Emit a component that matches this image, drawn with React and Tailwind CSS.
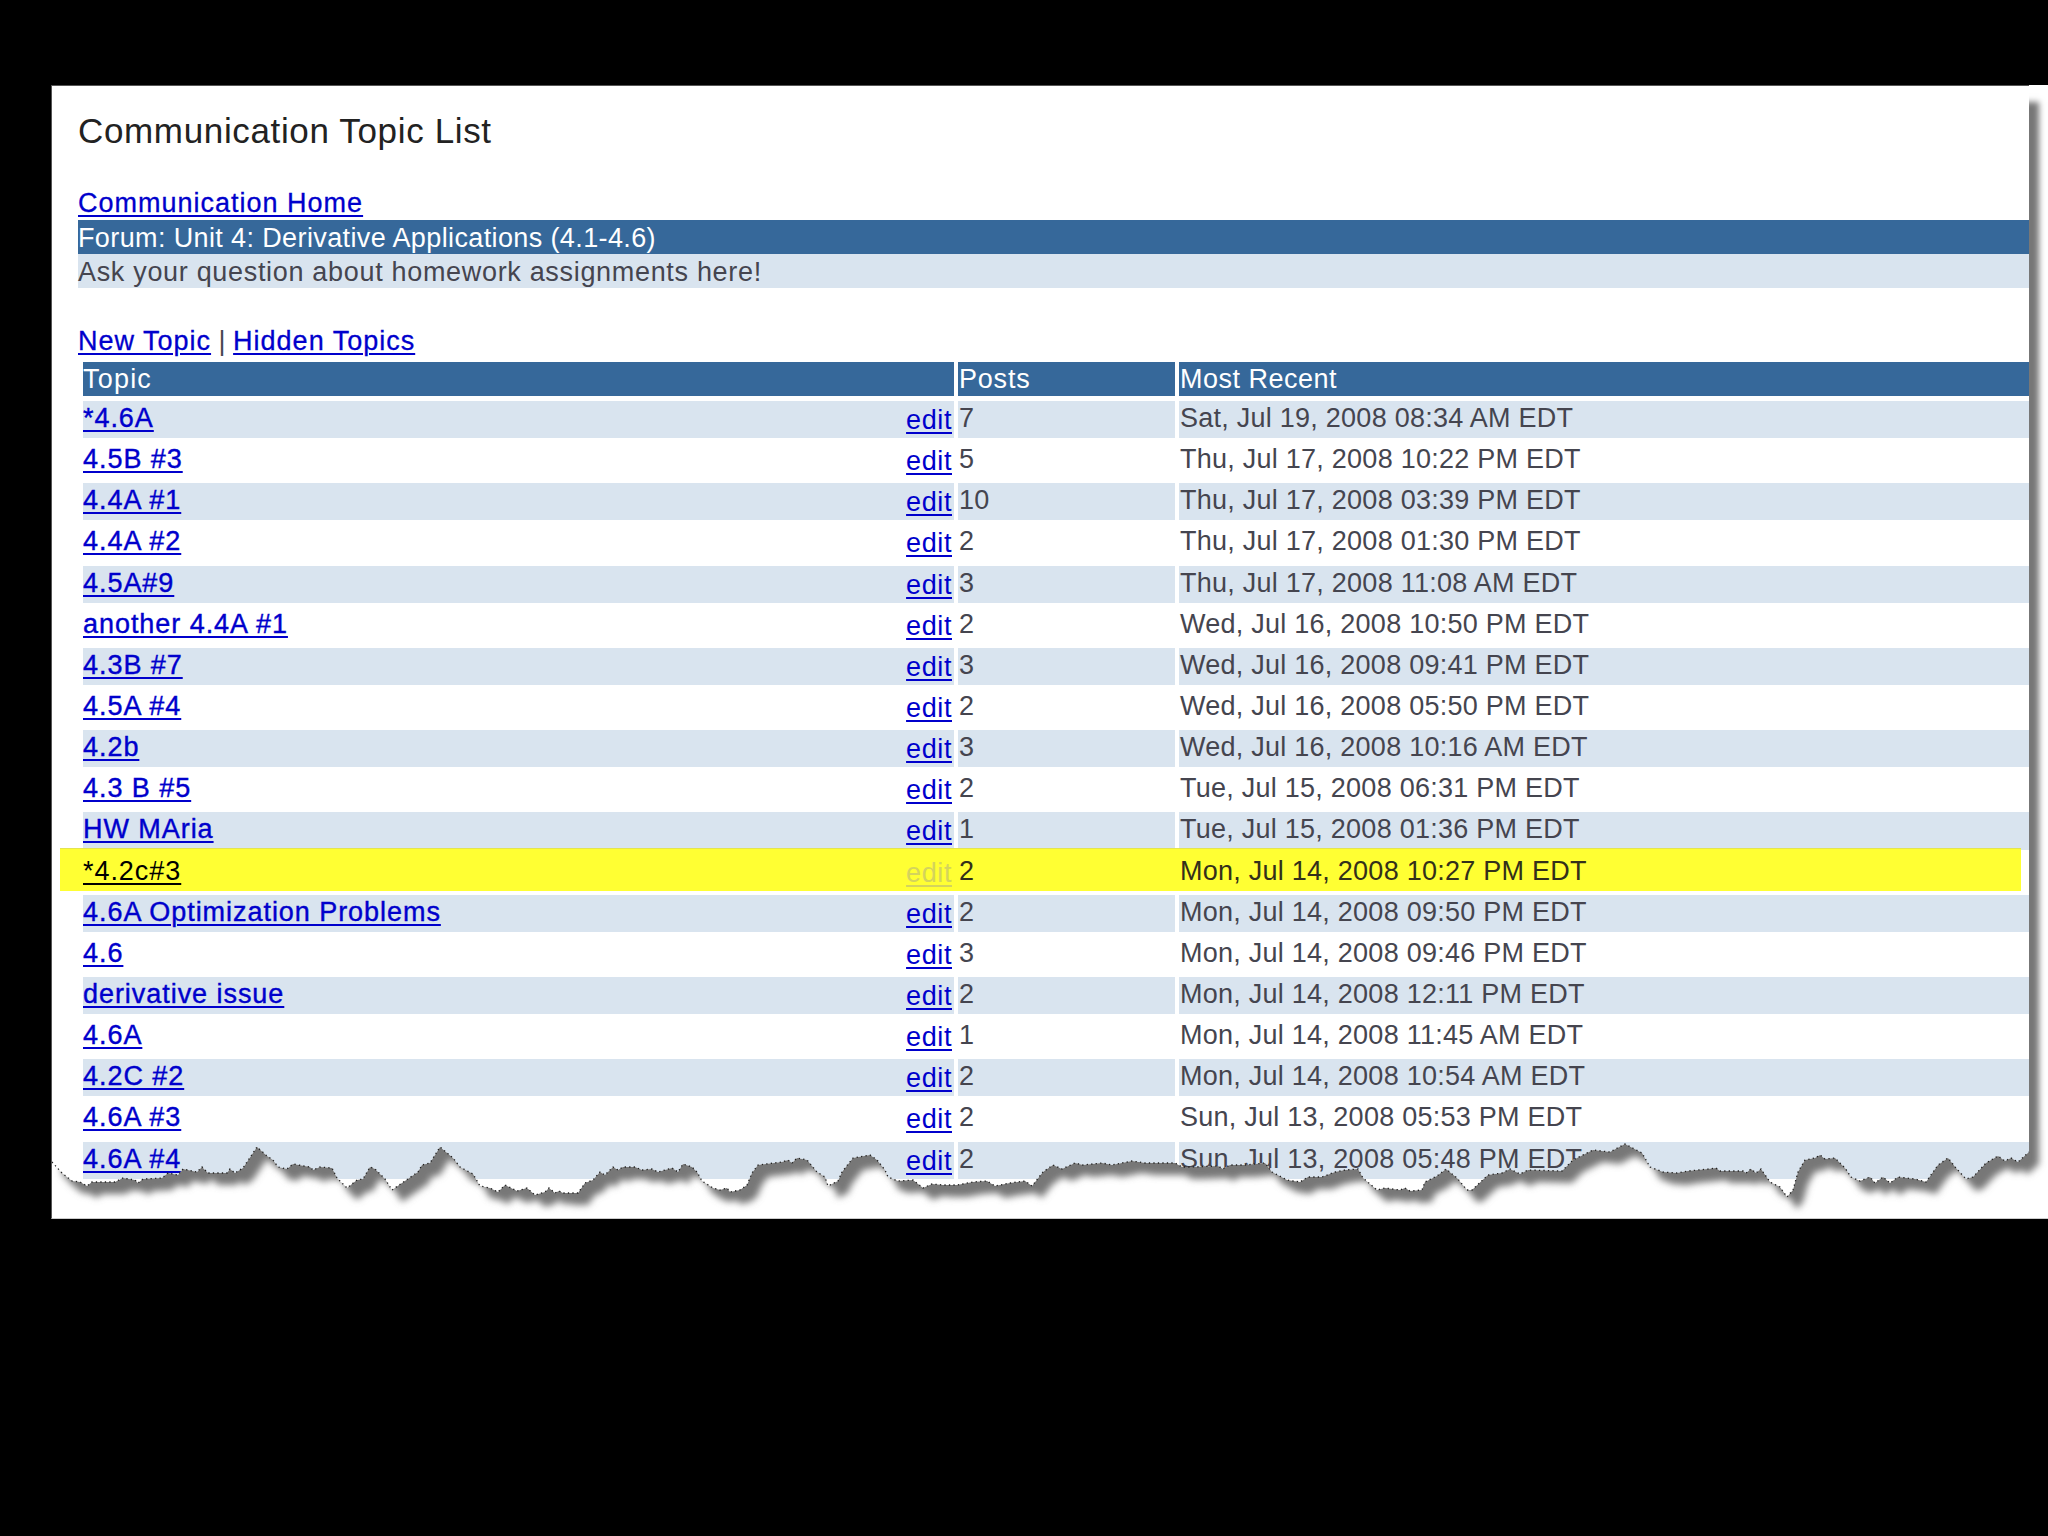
const topics = [
  ['*4.6A', '7', 'Sat, Jul 19, 2008 08:34 AM EDT'],
  ['4.5B #3', '5', 'Thu, Jul 17, 2008 10:22 PM EDT'],
  ['4.4A #1', '10', 'Thu, Jul 17, 2008 03:39 PM EDT'],
  ['4.4A #2', '2', 'Thu, Jul 17, 2008 01:30 PM EDT'],
  ['4.5A#9', '3', 'Thu, Jul 17, 2008 11:08 AM EDT'],
  ['another 4.4A #1', '2', 'Wed, Jul 16, 2008 10:50 PM EDT'],
  ['4.3B #7', '3', 'Wed, Jul 16, 2008 09:41 PM EDT'],
  ['4.5A #4', '2', 'Wed, Jul 16, 2008 05:50 PM EDT'],
  ['4.2b', '3', 'Wed, Jul 16, 2008 10:16 AM EDT'],
  ['4.3 B #5', '2', 'Tue, Jul 15, 2008 06:31 PM EDT'],
  ['HW MAria', '1', 'Tue, Jul 15, 2008 01:36 PM EDT'],
  ['*4.2c#3', '2', 'Mon, Jul 14, 2008 10:27 PM EDT'],
  ['4.6A Optimization Problems', '2', 'Mon, Jul 14, 2008 09:50 PM EDT'],
  ['4.6', '3', 'Mon, Jul 14, 2008 09:46 PM EDT'],
  ['derivative issue', '2', 'Mon, Jul 14, 2008 12:11 PM EDT'],
  ['4.6A', '1', 'Mon, Jul 14, 2008 11:45 AM EDT'],
  ['4.2C #2', '2', 'Mon, Jul 14, 2008 10:54 AM EDT'],
  ['4.6A #3', '2', 'Sun, Jul 13, 2008 05:53 PM EDT'],
  ['4.6A #4', '2', 'Sun, Jul 13, 2008 05:48 PM EDT'],
];

// torn bottom edge of the screenshot, in page coordinates
const torn =
  '52,1162 62,1173 72,1181 80,1182 87,1186 92,1182 115,1182 123,1178 135,1180 138,1183 143,1179 162,1178 168,1173 178,1175 183,1169 197,1172 202,1167 208,1173 227,1173 230,1169 235,1173 243,1168 257,1147 267,1156 273,1160 278,1167 287,1169 293,1164 310,1167 313,1170 320,1167 332,1168 337,1178 347,1188 357,1180 363,1179 370,1167 375,1169 385,1179 392,1190 402,1183 418,1172 422,1165 430,1163 440,1147 453,1158 460,1167 473,1174 480,1186 490,1188 498,1192 505,1185 517,1191 527,1188 535,1195 545,1192 549,1188 555,1193 559,1191 563,1193 578,1193 585,1183 593,1180 600,1172 605,1175 613,1167 618,1170 623,1167 635,1167 642,1170 652,1169 658,1172 672,1168 678,1172 683,1164 692,1167 697,1172 702,1181 713,1188 720,1190 727,1188 730,1192 740,1190 747,1185 752,1173 758,1165 782,1162 788,1160 792,1163 797,1158 807,1160 817,1172 825,1177 828,1186 838,1181 842,1172 853,1158 870,1155 877,1160 885,1170 888,1177 898,1181 913,1180 923,1188 932,1184 943,1185 957,1185 973,1182 987,1181 995,1186 1010,1183 1025,1181 1032,1186 1043,1172 1053,1165 1062,1169 1075,1163 1083,1165 1102,1163 1112,1165 1132,1161 1145,1163 1175,1163 1182,1167 1192,1167 1218,1166 1223,1169 1230,1165 1245,1165 1265,1163 1272,1172 1287,1180 1300,1182 1308,1177 1322,1177 1335,1172 1345,1170 1358,1169 1363,1178 1377,1190 1385,1188 1400,1190 1405,1188 1410,1191 1422,1190 1425,1182 1437,1176 1446,1169 1457,1178 1467,1190 1472,1190 1488,1175 1502,1173 1510,1169 1520,1174 1528,1170 1562,1171 1573,1160 1593,1150 1610,1152 1625,1144 1642,1153 1650,1167 1663,1172 1677,1173 1688,1171 1708,1169 1716,1168 1720,1171 1743,1171 1746,1173 1751,1169 1756,1173 1761,1169 1770,1182 1780,1187 1787,1197 1793,1190 1798,1172 1805,1160 1815,1158 1820,1155 1825,1159 1835,1158 1845,1168 1851,1177 1860,1181 1870,1177 1875,1183 1883,1177 1890,1183 1898,1177 1915,1179 1926,1182 1938,1165 1948,1158 1956,1168 1966,1179 1973,1177 1986,1163 1998,1156 2005,1161 2011,1158 2018,1162 2029,1152';

function TornEdge() {
  return (
    <svg
      className="absolute left-0 bottom-0 w-[1996px] h-[88px]"
      viewBox="52 1130 1996 88"
    >
      <defs>
        <clipPath id="below">
          <polygon points={`${torn} 2029,1130 2048,1130 2048,1218 52,1218`} />
        </clipPath>
        <filter id="soft" x="-5%" y="-50%" width="110%" height="200%">
          <feGaussianBlur stdDeviation="3.6" />
        </filter>
      </defs>
      <polygon points={`${torn} 2029,1130 2048,1130 2048,1218 52,1218`} fill="#ffffff" />
      <g clipPath="url(#below)">
        <polygon
          points={`${torn} 2029,1000 52,1000`}
          fill="#777777"
          filter="url(#soft)"
          transform="translate(10 12)"
        />
      </g>
      <polyline
        points={torn}
        fill="none"
        stroke="#222222"
        strokeWidth="1.3"
        strokeDasharray="1.3 3.2"
      />
    </svg>
  );
}

function Row({ topic, posts, recent, striped }) {
  const cell = striped ? 'bg-[#d9e4ef]' : '';
  return (
    <div className="grid grid-cols-[871px_217px_850px] gap-x-1 h-[37.15px] text-[#45454f] tracking-[0.25px]">
      <div className={`${cell} flex justify-between pr-[2px]`}>
        <a className="text-[#0000cc] tracking-[0.95px] [-webkit-text-stroke:0.4px] underline decoration-2 underline-offset-[3px]">{topic}</a>
        <a className="text-[#0000cc] tracking-[0.6px] underline decoration-2 underline-offset-[3px] mt-[2px]">edit</a>
      </div>
      <div className={`${cell} pl-[1px]`}>{posts}</div>
      <div className={`${cell} pl-[1px]`}>{recent}</div>
    </div>
  );
}

function HighlightRow({ topic, posts, recent }) {
  return (
    <div className="-ml-[23px] mr-[8px] -mt-[6px] h-[43.15px] pt-[6px] pl-[23px] bg-[#ffff33] border-t border-[#e4e450]">
      <div className="grid grid-cols-[871px_217px_850px] gap-x-1 -mt-[1px] text-[#33301a] tracking-[0.25px]">
        <div className="flex justify-between pr-[2px]">
          <a className="text-black tracking-[0.95px] underline decoration-2 underline-offset-[3px]">{topic}</a>
          <a className="text-[#d4d45c] tracking-[0.6px] underline decoration-2 underline-offset-[3px] mt-[2px]">edit</a>
        </div>
        <div className="pl-[1px]">{posts}</div>
        <div className="pl-[1px]">{recent}</div>
      </div>
    </div>
  );
}

export default function App() {
  return (
    <div className="h-[1536px] bg-black pt-[85px] overflow-hidden font-['Liberation_Sans',Arial,sans-serif] text-[27px] leading-[34px]">
      <div className="relative ml-[51px] h-[1134px] bg-white border-l border-b border-l-[#555555] border-b-[#cccccc] overflow-hidden">
        <div className="w-[1977px] h-[1200px] bg-white border-t border-[#555555] pl-[26px] pt-[25px] shadow-[10px_17px_6px_#777777]">
          <h1 className="text-[35px] leading-[40px] tracking-[0.65px] text-[#222222]">Communication Topic List</h1>
          <div className="mt-[35px] h-[34px]">
            <a className="text-[#0000cc] tracking-[1px] [-webkit-text-stroke:0.3px] underline decoration-2 underline-offset-[3px]">Communication Home</a>
          </div>
          <div className="h-[34px] pt-[1px] bg-[#36689a] text-white tracking-[0.38px]">
            Forum: Unit 4: Derivative Applications (4.1-4.6)
          </div>
          <div className="h-[34px] pt-[1px] bg-[#d9e4ef] text-[#45454f] tracking-[0.68px]">
            Ask your question about homework assignments here!
          </div>
          <div className="mt-[36px] h-[34px] text-[#45454f]">
            <a className="text-[#0000cc] tracking-[1px] [-webkit-text-stroke:0.3px] underline decoration-2 underline-offset-[3px]">New Topic</a>
            {' | '}
            <a className="text-[#0000cc] tracking-[1px] [-webkit-text-stroke:0.3px] underline decoration-2 underline-offset-[3px]">Hidden Topics</a>
          </div>
          <div className="ml-[5px] mt-[4px] flex flex-col gap-[4px]">
            <div className="grid grid-cols-[871px_217px_850px] gap-x-1 h-[34px] mb-[1px] text-white tracking-[0.5px]">
              <div className="bg-[#36689a] tracking-[1.2px]">Topic</div>
              <div className="bg-[#36689a] pl-[1px] tracking-[0.8px]">Posts</div>
              <div className="bg-[#36689a] pl-[1px]">Most Recent</div>
            </div>
            {topics.map(([topic, posts, recent], i) =>
              i === 11 ? (
                <HighlightRow key={i} topic={topic} posts={posts} recent={recent} />
              ) : (
                <Row key={i} topic={topic} posts={posts} recent={recent} striped={i % 2 === 0} />
              ),
            )}
          </div>
        </div>
        <TornEdge />
      </div>
    </div>
  );
}
